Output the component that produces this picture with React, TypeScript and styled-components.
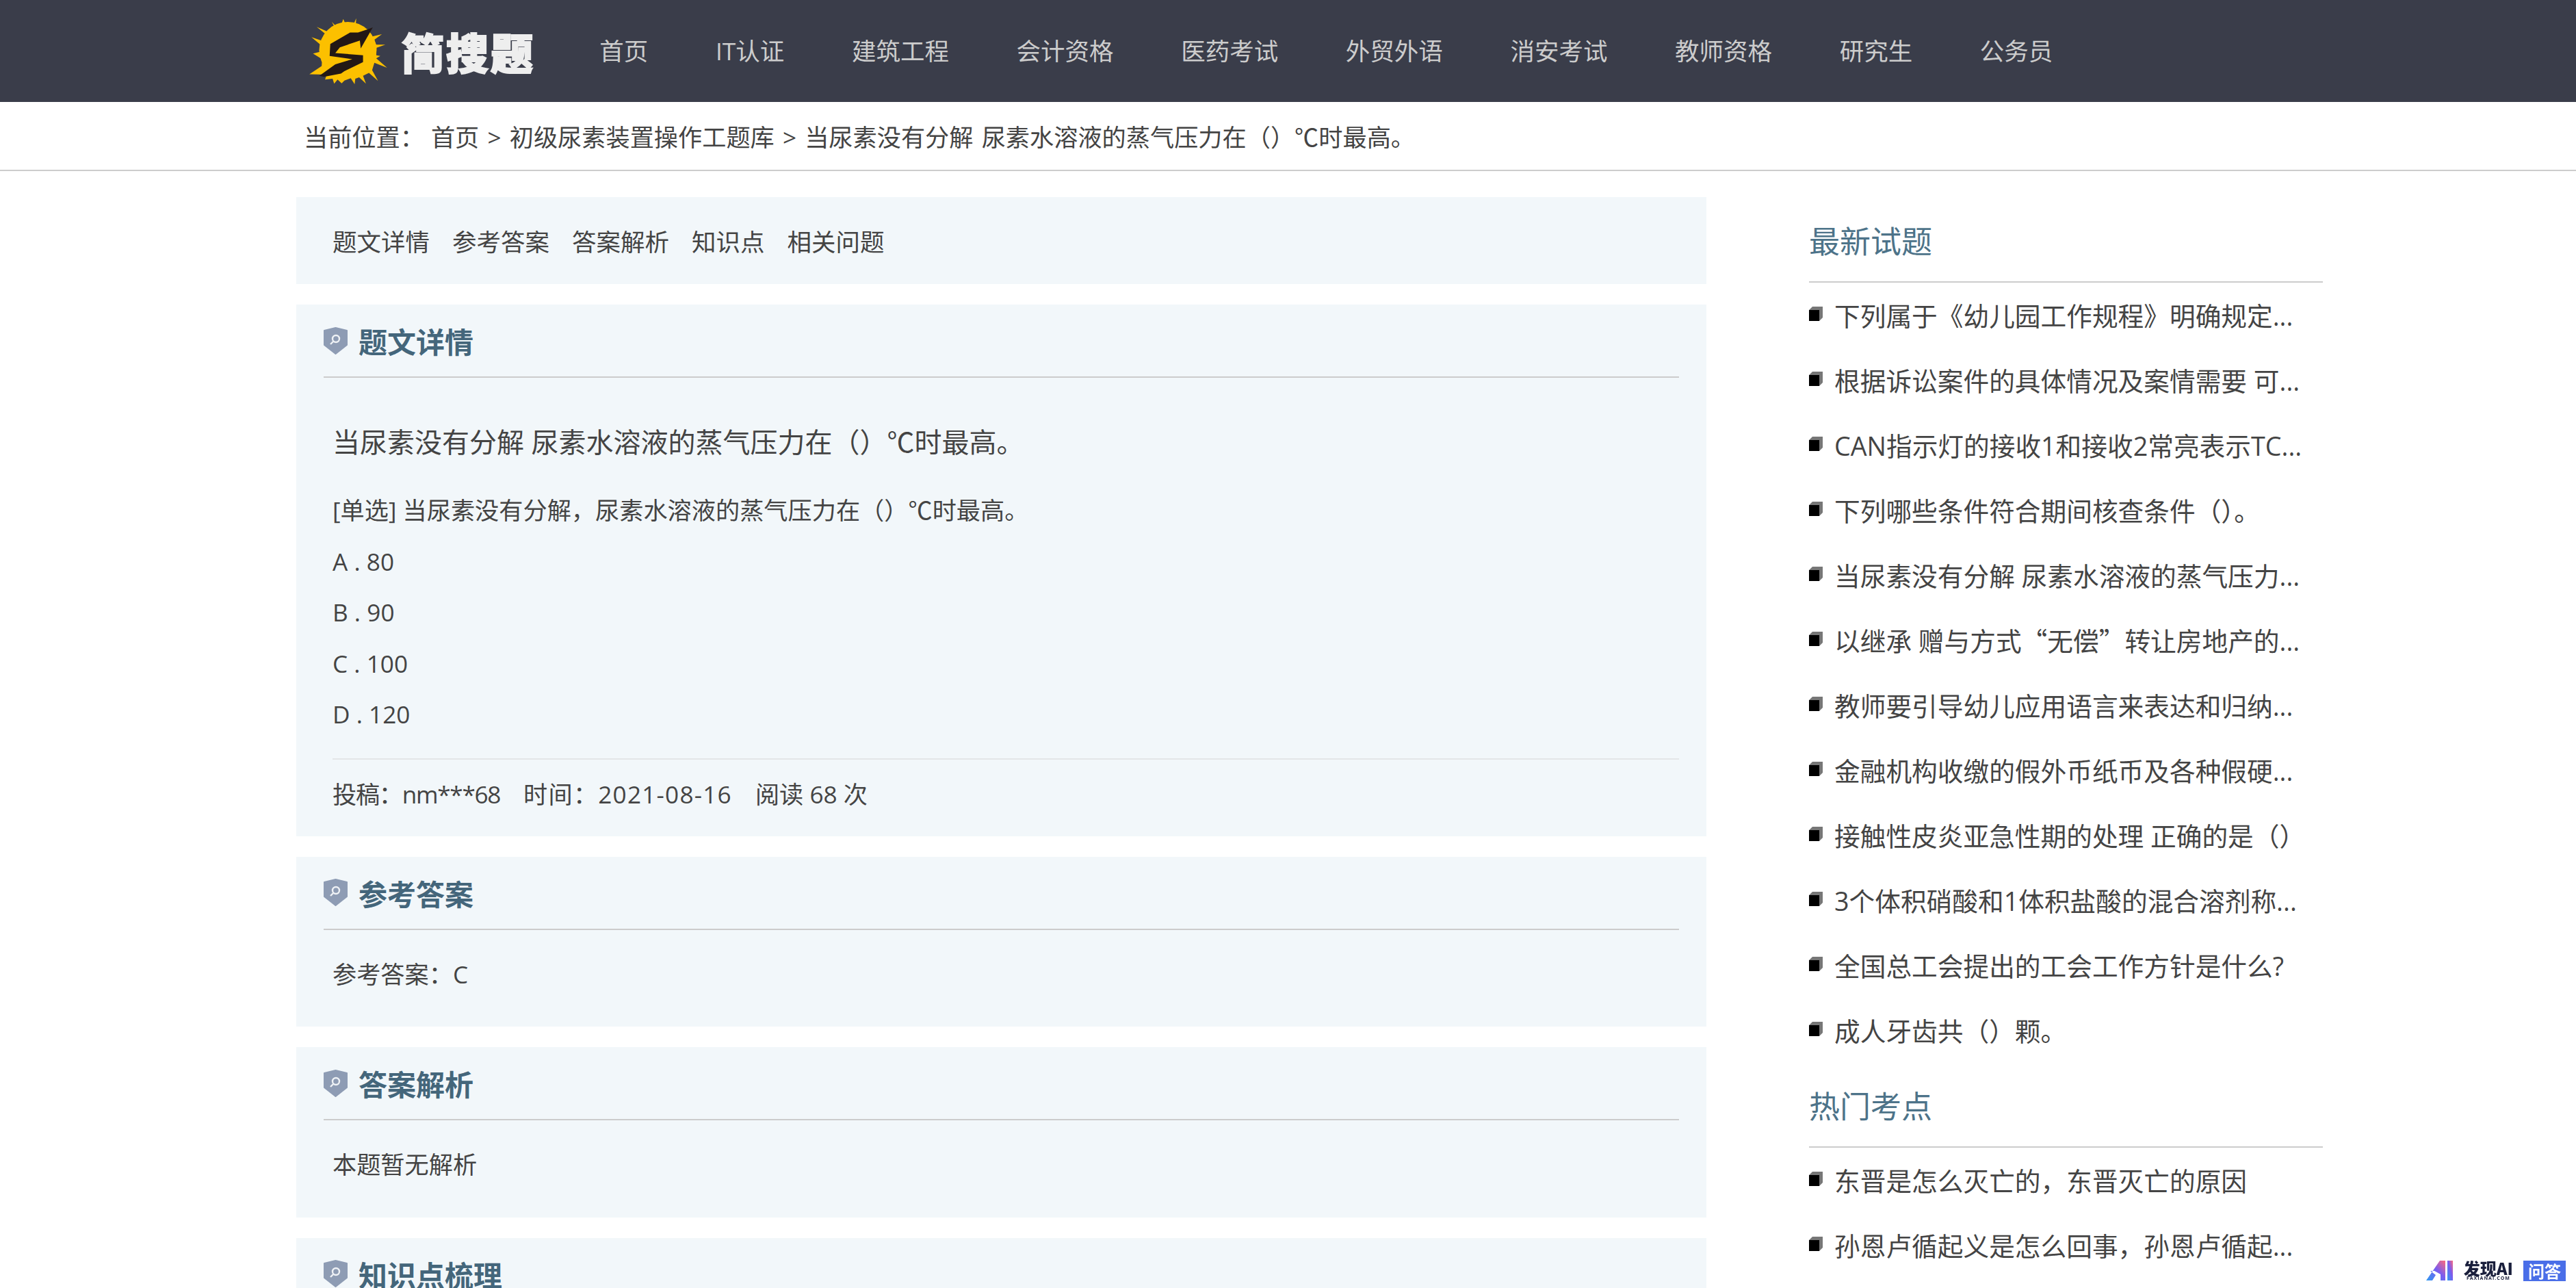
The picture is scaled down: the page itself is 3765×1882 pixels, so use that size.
import * as React from "react";
import styled, { createGlobalStyle } from "styled-components";

const colors = {
	nav: "#3a3d4a",
	panel: "#f2f7fa",
	text: "#444",
	heading: "#44667b",
	sideHeading: "#4d7389",
	line: "#ccc",
};

const GlobalStyle = createGlobalStyle`
	html, body {
		margin: 0;
		height: 100%;
		overflow: hidden;
		background: #fff;
	}
	body {
		font-family: "Open Sans", "Noto Sans CJK SC", sans-serif;
		color: ${colors.text};
	}
`;

const NavBar = styled.header`
	height: 149px;
	background: ${colors.nav};
	display: flex;
	align-items: center;
	padding-left: 452px;
`;

const Logo = styled.a`
	display: flex;
	align-items: center;
	width: 375px;
	flex: none;
`;

const LogoText = styled.span`
	margin-left: 21px;
	font-family: "Noto Sans CJK SC", sans-serif;
	font-size: 62px;
	font-weight: 900;
	line-height: 62px;
	letter-spacing: 3px;
	color: #eee;
	white-space: nowrap;
	-webkit-text-stroke: 2px #eee;
`;

const NavList = styled.nav`
	display: flex;
`;

const NavItem = styled.a`
	padding: 0 49.3px;
	font-size: 35.5px;
	line-height: 149px;
	color: #ccc;
	white-space: nowrap;
`;

const Crumbs = styled.div`
	height: 99px;
	border-bottom: 2px solid ${colors.line};
	padding-left: 444px;
	display: flex;
	align-items: center;
	font-size: 35.2px;
	white-space: nowrap;
	word-spacing: 3px;
	span + span {
		margin-left: 10px;
	}
`;

const Page = styled.div`
	display: flex;
	align-items: flex-start;
	padding: 38px 0 0 433px;
	gap: 150px;
`;

const Main = styled.main`
	width: 2061px;
	flex: none;
	display: flex;
	flex-direction: column;
	gap: 30px;
`;

const Tabs = styled.div`
	height: 127px;
	background: ${colors.panel};
	display: flex;
	align-items: center;
	gap: 33px;
	padding-left: 53px;
	font-size: 35.5px;
`;

const Section = styled.section`
	background: ${colors.panel};
	padding: 0 40px;
`;

const SectionHead = styled.div`
	height: 105px;
	border-bottom: 2px solid ${colors.line};
	display: flex;
	align-items: center;
	gap: 16px;
`;

const SectionTitle = styled.h2`
	margin: 0;
	font-size: 42px;
	font-weight: 700;
	color: ${colors.heading};
`;

const Body = styled.div<{ $pad?: string }>`
	padding: ${(p) => p.$pad || "0 0 0 13px"};
	font-size: 35.2px;
`;

const Question = styled.h1`
	margin: 0 0 22px;
	padding-top: 54px;
	font-size: 40px;
	line-height: 80px;
	font-weight: 400;
`;

const Row = styled.p`
	margin: 0;
	line-height: 74.5px;
`;

const Meta = styled.div`
	margin-top: 27px;
	border-top: 2px solid #e4e6e8;
	line-height: 100px;
	height: 112px;
	display: flex;
	gap: 34px;
`;

const MetaItem = styled.span<{ $track?: number }>`
	letter-spacing: ${(p) => p.$track || 0}px;
`;

const Side = styled.aside`
	width: 751px;
	flex: none;
`;

const SideHead = styled.h3`
	margin: 0;
	height: 123px;
	border-bottom: 2px solid ${colors.line};
	font-size: 45px;
	line-height: 130px;
	font-weight: 400;
	color: ${colors.sideHeading};
`;

const SideList = styled.ul`
	list-style: none;
	margin: -1px 0 0;
	padding: 0;
`;

const SideItem = styled.li`
	display: flex;
	align-items: center;
	height: 95px;
	gap: 17px;
	font-size: 37.7px;
	white-space: nowrap;
`;

const Wide = styled.span`
	font-family: "Noto Sans CJK SC", sans-serif;
`;

const Badge = styled.div`
	position: fixed;
	right: 15px;
	bottom: 10px;
	display: flex;
	align-items: flex-start;
	gap: 10px;
`;

const BadgeName = styled.div`
	display: flex;
	flex-direction: column;
	align-items: center;
	margin-left: 5px;
	color: #1a1f3c;
	font-family: "Noto Sans CJK SC", sans-serif;
	font-weight: 900;
	font-size: 24px;
	line-height: 22px;
	small {
		font-family: "Open Sans", sans-serif;
		font-size: 7px;
		line-height: 8px;
		letter-spacing: 1px;
		font-weight: 700;
	}
`;

const BadgeTag = styled.div`
	width: 62px;
	height: 30px;
	margin-left: 5px;
	background: #4a6ee8;
	color: #fff;
	font-family: "Noto Sans CJK SC", sans-serif;
	font-size: 24px;
	font-weight: 700;
	line-height: 30px;
	text-align: center;
`;

function LogoMark() {
	return (
		<svg width="114" height="97" viewBox="36 50 342 292" style={{ flex: "none" }}>
			<ellipse cx="205" cy="192" rx="126" ry="124" fill="#fcc000" />
			<path
				fill="#fcc000"
				d="M135 68 L165 100 L172 92 L185 55 L200 90 L228 84 L242 52 L240 88 L290 100 L300 135 L355 122 L322 146 L330 168 L370 168 L332 182 L330 215 L348 218 L330 228 L378 270 L322 248 L312 280 L338 328 L298 292 L272 305 L285 340 L255 312 L238 318 L235 342 L218 316 L190 326 L178 338 L160 322 L145 340 L138 318 L105 322 L112 300 L36 298 L90 262 L92 232 L52 207 L88 198 L86 170 L45 135 L95 152 L108 122 L68 90 L118 112 L150 98 Z"
			/>
			<path
				fill="#231815"
				d="M315 92 L262 185 L258 150 L170 180 L150 205 L272 215 L272 245 L190 285 L175 295 L100 310 L80 305 L150 255 L225 232 L125 218 L128 165 L215 115 L250 115 L300 98 Z"
			/>
		</svg>
	);
}

function Shield() {
	return (
		<svg width="35" height="40" viewBox="0 0 35 40" style={{ flex: "none" }}>
			<path fill="#8e9cb4" stroke="#8e9cb4" strokeWidth="2" strokeLinejoin="round" d="M17.5 1 L34 5 V26 L17.5 39 L1 26 V5 Z" />
			<circle cx="18" cy="17" r="5" fill="none" stroke="#eef1f5" strokeWidth="2.4" />
			<path d="M14 21 L10 25" stroke="#eef1f5" strokeWidth="2.4" />
		</svg>
	);
}

function Bullet() {
	return (
		<svg width="20" height="21" viewBox="0 0 20 21" style={{ flex: "none", marginTop: "-3px" }}>
			<path fill="#777" d="M5 0 H20 V16 L15 21 V5 H0 Z" />
			<rect x="0" y="5" width="15" height="16" fill="#000" />
		</svg>
	);
}

function BadgeLogo() {
	return (
		<svg width="40" height="29" viewBox="0 0 40 29" style={{ flex: "none" }}>
			<defs>
				<linearGradient id="ai" x1="0" y1="1" x2="1" y2="0">
					<stop offset="0" stopColor="#2f9bf0" />
					<stop offset="0.55" stopColor="#7a5cf0" />
					<stop offset="1" stopColor="#ff6a7a" />
				</linearGradient>
			</defs>
			<path fill="url(#ai)" d="M0 29 L20 0 H28 V29 H21 V20 L12 15 L6 15 L14 21 L9 29 Z" />
			<rect x="31" y="0" width="8" height="29" fill="url(#ai)" />
		</svg>
	);
}

const navItems = ["首页", "IT认证", "建筑工程", "会计资格", "医药考试", "外贸外语", "消安考试", "教师资格", "研究生", "公务员"];
const tabs = ["题文详情", "参考答案", "答案解析", "知识点", "相关问题"];
const latest: React.ReactNode[] = [
	"下列属于《幼儿园工作规程》明确规定...",
	"根据诉讼案件的具体情况及案情需要 可...",
	"CAN指示灯的接收1和接收2常亮表示TC...",
	"下列哪些条件符合期间核查条件（）。",
	"当尿素没有分解 尿素水溶液的蒸气压力...",
	<>以继承 赠与方式<Wide>“无偿”</Wide>转让房地产的...</>,
	"教师要引导幼儿应用语言来表达和归纳...",
	"金融机构收缴的假外币纸币及各种假硬...",
	"接触性皮炎亚急性期的处理 正确的是（）",
	"3个体积硝酸和1体积盐酸的混合溶剂称...",
	"全国总工会提出的工会工作方针是什么?",
	"成人牙齿共（）颗。",
];
const hot: React.ReactNode[] = ["东晋是怎么灭亡的，东晋灭亡的原因", "孙恩卢循起义是怎么回事，孙恩卢循起..."];

function SideLinks({ items }: { items: React.ReactNode[] }) {
	return (
		<SideList>
			{items.map((t, i) => (
				<SideItem key={i}>
					<Bullet />
					<span>{t}</span>
				</SideItem>
			))}
		</SideList>
	);
}

function Head({ title }: { title: string }) {
	return (
		<SectionHead>
			<Shield />
			<SectionTitle>{title}</SectionTitle>
		</SectionHead>
	);
}

export default function App() {
	return (
		<>
			<GlobalStyle />
			<NavBar>
				<Logo>
					<LogoMark />
					<LogoText>简搜题</LogoText>
				</Logo>
				<NavList>
					{navItems.map((n) => (
						<NavItem key={n}>{n}</NavItem>
					))}
				</NavList>
			</NavBar>
			<Crumbs>
				<span>当前位置：</span>
				<span>首页 &gt; 初级尿素装置操作工题库 &gt; 当尿素没有分解 尿素水溶液的蒸气压力在（）℃时最高。</span>
			</Crumbs>
			<Page>
				<Main>
					<Tabs>
						{tabs.map((t) => (
							<span key={t}>{t}</span>
						))}
					</Tabs>
					<Section>
						<Head title="题文详情" />
						<Body>
							<Question>当尿素没有分解 尿素水溶液的蒸气压力在（）℃时最高。</Question>
							<Row>[单选] 当尿素没有分解，尿素水溶液的蒸气压力在（）℃时最高。</Row>
							<Row>A . 80</Row>
							<Row>B . 90</Row>
							<Row>C . 100</Row>
							<Row>D . 120</Row>
							<Meta>
								<MetaItem $track={-1.3}>投稿：nm***68</MetaItem>
								<MetaItem $track={1.2}>时间：2021-08-16</MetaItem>
								<MetaItem>阅读 68 次</MetaItem>
							</Meta>
						</Body>
					</Section>
					<Section>
						<Head title="参考答案" />
						<Body $pad="27px 0 40px 13px">
							<Row>参考答案：C</Row>
						</Body>
					</Section>
					<Section>
						<Head title="答案解析" />
						<Body $pad="27px 0 40px 13px">
							<Row>本题暂无解析</Row>
						</Body>
					</Section>
					<Section>
						<Head title="知识点梳理" />
					</Section>
				</Main>
				<Side>
					<SideHead>最新试题</SideHead>
					<SideLinks items={latest} />
					<SideHead>热门考点</SideHead>
					<SideLinks items={hot} />
				</Side>
			</Page>
			<Badge>
				<BadgeLogo />
				<BadgeName>
					发现AI
					<small>FAXIANAI.COM</small>
				</BadgeName>
				<BadgeTag>问答</BadgeTag>
			</Badge>
		</>
	);
}
